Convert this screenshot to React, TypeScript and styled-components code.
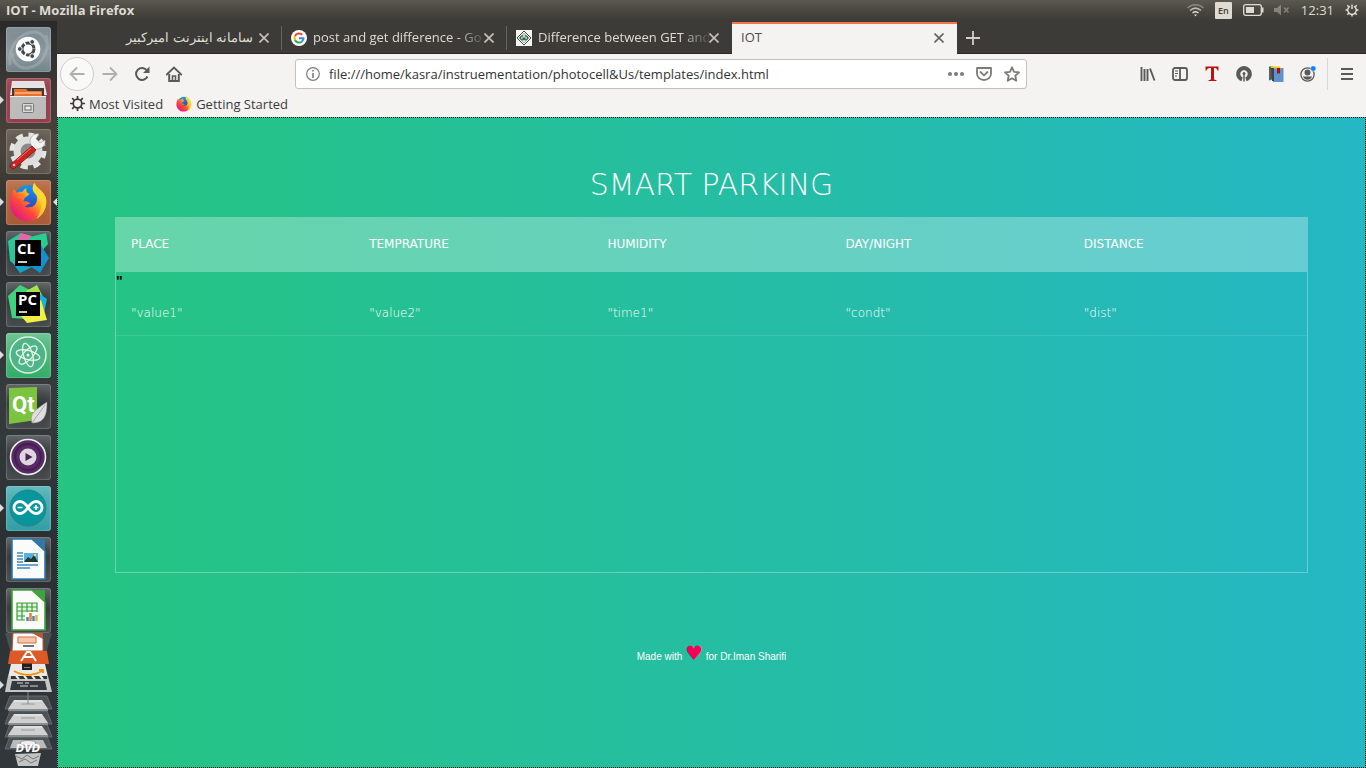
import React from "react";
import styled, { createGlobalStyle } from "styled-components";

const uiFont = `"Open Sans", "Noto Sans", sans-serif`;

const GlobalStyle = createGlobalStyle`
  * { box-sizing: border-box; }
  body { margin: 0; background: #2e3335; }
  button { font: inherit; color: inherit; background: none; border: 0; padding: 0; cursor: pointer; }
  a { color: inherit; text-decoration: none; }
`;

const Desktop = styled.div`
  min-height: 100vh;
  display: flex;
  flex-direction: column;
  font-family: ${uiFont};
`;

const TitleBar = styled.header`
  height: 21px;
  flex: none;
  display: flex;
  align-items: center;
  justify-content: space-between;
  padding: 0 6px 1px;
  background: linear-gradient(#5b594f, #45443e 60%, #3c3b37);
  color: #dfdbd2;
`;

const WindowTitle = styled.span`
  font-size: 13px;
  line-height: 18px;
  font-weight: 700;
`;

const Indicators = styled.div`
  display: flex;
  align-items: center;
`;

const Indicator = styled.button<{ $gap: number }>`
  display: flex;
  margin-right: ${(p) => p.$gap}px;
`;

const Keyboard = styled(Indicator)`
  width: 17px;
  height: 17px;
  align-items: center;
  justify-content: center;
  border-radius: 1px;
  background: #dfdbd2;
  color: #3c3b37;
  font-size: 9px;
  font-weight: 600;
`;

const Clock = styled(Indicator)`
  font-size: 13px;
  line-height: 18px;
`;

const Workspace = styled.div`
  flex: 1;
  display: flex;
`;

const Launcher = styled.nav`
  width: 57px;
  flex: none;
  display: flex;
  flex-direction: column;
  align-items: center;
  gap: 6px;
  padding-top: 6px;
  background: linear-gradient(#292a29, #3a3834 8%, #4b443b 17%, #3a3733 22%, #2d3133 30%, #363b3d 50%, #2b3033 70%, #31373a);
`;

const Tile = styled.button<{ $bg: string }>`
  position: relative;
  width: 45px;
  height: 45px;
  flex: none;
  border-radius: 3px;
  background: ${(p) => p.$bg};
  box-shadow: inset 0 0 0 1px rgba(255, 255, 255, 0.16), inset 0 6px 8px rgba(255, 255, 255, 0.1);
`;

const Arrow = styled.span<{ $side: "left" | "right" }>`
  position: absolute;
  top: 18px;
  ${(p) => p.$side}: -6px;
  border: 4px solid transparent;
  border-${(p) => p.$side}-color: #dcdcdc;
  border-${(p) => (p.$side === "left" ? "right" : "left")}-width: 0;
`;

const Stack = styled.svg`
  display: block;
  flex: none;
  margin-top: -6px;
`;

const Browser = styled.div`
  flex: 1;
  min-width: 0;
  display: flex;
  flex-direction: column;
`;

const TabStrip = styled.div`
  height: 33px;
  flex: none;
  display: flex;
  padding-top: 1px;
  background: #3c3b37;
  box-shadow: inset 0 -1px #2b2529;
`;

const TabItem = styled.div<{ $active?: boolean }>`
  width: 225px;
  display: flex;
  align-items: center;
  padding: 0 13px 0 9px;
  font-size: 13px;
  line-height: 18px;
  color: ${(p) => (p.$active ? "#4c4c4c" : "#dfdbd2")};
  background: ${(p) => (p.$active ? "#f4f3f2" : "transparent")};
  box-shadow: ${(p) => (p.$active ? "inset 0 2px #f07746" : "none")};
`;

const TabSeparator = styled.span`
  width: 1px;
  height: 24px;
  margin: 4px 0 0 -1px;
  background: #66645f;
`;

const TabLabel = styled.button<{ $fade?: boolean }>`
  flex: 1;
  min-width: 0;
  white-space: nowrap;
  text-align: start;
  padding: ${(p) => (p.$fade ? "0 0 2px 6px" : "0 6px 2px 0")};
  ${(p) => p.$fade && "mask-image: linear-gradient(to right, #000 84%, rgba(0, 0, 0, 0.1));"}
`;

const IconButton = styled.button<{ $size?: number }>`
  width: ${(p) => p.$size ?? 32}px;
  height: ${(p) => p.$size ?? 32}px;
  flex: none;
  display: flex;
  align-items: center;
  justify-content: center;
`;

const NavBar = styled.div`
  height: 40px;
  flex: none;
  display: flex;
  align-items: center;
  padding: 0 1px 0 3px;
  background: #f4f3f2;
  color: #5a5a58;
`;

const BackButton = styled(IconButton)`
  border: 1px solid #cfcdcb;
  border-radius: 50%;
  background: #f9f9f8;
  color: #b0afad;
`;

const ForwardButton = styled(IconButton)`
  color: #b0afad;
`;

const UrlBar = styled.div`
  flex: 1;
  min-width: 0;
  height: 30px;
  margin: 0 105px;
  display: flex;
  align-items: center;
  padding: 0 0 0 1px;
  border: 1px solid #c4c1be;
  border-radius: 3px;
  background: #fff;
  color: #7b7b7a;
`;

const UrlInput = styled.input`
  flex: 1;
  min-width: 0;
  padding: 0;
  border: 0;
  outline: 0;
  background: none;
  font: 13px ${uiFont};
  color: #333;
`;

const MenuButton = styled(IconButton)`
  width: 38px;
  margin-left: 3px;
  border-left: 1px solid #d9d7d5;
`;

const BookmarksBar = styled.div`
  height: 23px;
  flex: none;
  display: flex;
  align-items: center;
  gap: 13px;
  padding: 0 13px 4px;
  background: #f4f3f2;
  color: #3b3b3b;
  font-size: 13px;
  line-height: 18px;
`;

const Bookmark = styled.a`
  display: flex;
  align-items: center;
  gap: 4px;
`;

const Page = styled.main`
  flex: 1;
  padding: 50px 57px 0 57px;
  border: 1px dotted #000;
  background: linear-gradient(to right, #25c481, #25b7c4);
  font-family: "DejaVu Sans", sans-serif;
`;

const Heading = styled.h1`
  margin: 0 0 15px;
  font-size: 30px;
  line-height: 34px;
  font-weight: 300;
  text-align: center;
  text-transform: uppercase;
  color: #fff;
`;

const TablePanel = styled.div`
  min-height: 356px;
  border: 1px solid rgba(255, 255, 255, 0.3);
  border-top: 0;
`;

const DataTable = styled.table`
  width: 100%;
  table-layout: fixed;
  border-collapse: collapse;
`;

const HeadRow = styled.tr`
  background: rgba(255, 255, 255, 0.3);
`;

const HeadCell = styled.th`
  padding: 20px 15px;
  font-size: 12px;
  line-height: 15px;
  font-weight: 500;
  text-align: left;
  text-transform: uppercase;
  color: #fff;
`;

const StrayCell = styled.td`
  height: 18px;
  padding: 0;
  font: bold 14px/18px "Liberation Sans", sans-serif;
  color: #000;
`;

const Cell = styled.td`
  padding: 16px 15px 14px;
  border-bottom: 1px solid rgba(255, 255, 255, 0.1);
  font-size: 12px;
  line-height: 15px;
  font-weight: 300;
  color: #fff;
`;

const Credit = styled.footer`
  margin-top: 68px;
  font-family: "Liberation Sans", sans-serif;
  font-size: 10px;
  line-height: 24px;
  text-align: center;
  color: #fff;
`;

const Heart = styled.span`
  font-family: "DejaVu Sans", sans-serif;
  font-size: 20px;
  color: #f50057;
`;

const FirefoxLogo = ({ size, id }: { size: number; id: string }) => (
  <svg width={size} height={size} viewBox="0 0 40 40" aria-hidden>
    <defs>
      <linearGradient id={`${id}-body`} x1="0.85" y1="0.1" x2="0.15" y2="0.9">
        <stop offset="0" stopColor="#fff14a" />
        <stop offset="0.35" stopColor="#ffb01f" />
        <stop offset="0.65" stopColor="#ff4a3a" />
        <stop offset="1" stopColor="#e31587" />
      </linearGradient>
      <linearGradient id={`${id}-globe`} x1="0.5" y1="0" x2="0.5" y2="1">
        <stop offset="0" stopColor="#0a9bf0" />
        <stop offset="1" stopColor="#3a2fb4" />
      </linearGradient>
    </defs>
    <circle cx="20" cy="17" r="15" fill={`url(#${id}-globe)`} />
    <path
      d="M5 6c1 2 2 3 3 4 2-1 4-1 6-1 1-2 2-3 4-4-1 3 0 5 3 6-1 2-3 3-5 4 0 2-1 3-2 4 3-1 6 0 8 2-2 0-3 2-6 3 4 2 10 1 12-4 2-5 0-9-3-12-1-2-1-5 1-8 1 3 4 5 7 8 4 4 6 8 5 14-1 10-9 17-18 17C9 39 1 31 1 21 1 15 3 11 5 6z"
      fill={`url(#${id}-body)`}
    />
    <path d="M26 0c1 3 4 5 7 8 4 4 6 8 5 14-1 7-5 12-10 15 4-6 6-12 4-18-1-4-5-7-7-10-1-3-1-6 1-9z" fill="#ffd92e" opacity="0.8" />
  </svg>
);

const Svg = ({ size = 16, children }: { size?: number; children: React.ReactNode }) => (
  <svg width={size} height={size} viewBox="0 0 16 16" fill="none" stroke="currentColor" strokeWidth="1.8" aria-hidden>
    {children}
  </svg>
);

const CloseButton = () => (
  <IconButton $size={10} aria-label="Close tab">
    <svg width="10" height="10" viewBox="0 0 10 10" fill="none" stroke="currentColor" strokeWidth="1.6" opacity="0.85" aria-hidden>
      <path d="M0.5 0.5l9 9M9.5 0.5l-9 9" />
    </svg>
  </IconButton>
);

const GoogleIcon = () => (
  <svg width="16" height="16" viewBox="0 0 16 16" fill="none" strokeWidth="2" aria-hidden>
    <circle cx="8" cy="8" r="8" fill="#fff" />
    <path d="M11.2 4.8A4.5 4.5 0 0 0 4 6" stroke="#ea4335" />
    <path d="M4 6a4.5 4.5 0 0 0 0 4" stroke="#fbbc05" />
    <path d="M4 10a4.5 4.5 0 0 0 7 1.4" stroke="#34a853" />
    <path d="M8 8.2h4.5a4.5 4.5 0 0 1-1.5 3.2" stroke="#4285f4" />
  </svg>
);

const DiamondIcon = () => (
  <svg width="16" height="16" viewBox="0 0 16 16" aria-hidden>
    <path d="M0 0h16v16H0z" fill="#f4f6f4" />
    <path d="M8 1l7 7-7 7-7-7z" fill="#fff" stroke="#3c4641" />
    <path d="M8 3l5 5-5 5-5-5z" fill="#d6e4da" stroke="#8b9690" strokeWidth="0.7" />
    <path d="M7.3 6a2 2 0 1 0 .2 3.5V8H6M8.7 6a2 2 0 1 1-.2 3.5V8H10" fill="none" stroke="#2f6a46" strokeWidth="1.2" />
  </svg>
);

const GearIcon = ({ size = 14 }: { size?: number }) => (
  <svg width={size} height={size} viewBox="0 0 14 14" fill="none" stroke="currentColor" aria-hidden>
    <circle cx="7" cy="7" r="4" strokeWidth="1.6" />
    <path d="M7 0v3M7 11v3M0 7h3M11 7h3M2 2l2.200 2.200M9.800 9.800L12 12M12 2L9.800 4.200M4.200 9.800L2 12" strokeWidth="1.6" />
  </svg>
);

const PowerGearIcon = () => (
  <svg width="14" height="14" viewBox="0 0 14 14" fill="none" stroke="currentColor" aria-hidden>
    <path d="M5 3.300a4.300 4.300 0 1 0 4 0" strokeWidth="1.500" />
    <path d="M7 1.500v4.500M7 11.500v2M0.500 7H3M11 7h2.500M2.300 2.300L4 4M10 10l1.700 1.700M11.700 2.300L10 4M4 10l-1.700 1.700" strokeWidth="1.500" />
  </svg>
);

const UbuntuArt = () => (
  <>
    <path d="M4 38C2 20 12 5 30 5c8 2 12 10 12 17M40 8c4 14-2 30-18 33C12 42 6 34 6 26" fill="none" stroke="#c5ced2" strokeWidth="3" opacity="0.3" />
    <circle cx="22" cy="22" r="12.300" fill="#fff" />
    <circle cx="22" cy="22" r="6" fill="none" stroke="#3e4a50" strokeWidth="3" strokeDasharray="11.200 1.400" />
    <g fill="#3e4a50" stroke="#fff">
      <circle cx="13.800" cy="22" r="2.400" />
      <circle cx="26.200" cy="14.900" r="2.400" />
      <circle cx="26.200" cy="29.100" r="2.400" />
    </g>
  </>
);

const FilesArt = () => (
  <>
    <path d="M6 3h32l3 14H4z" fill="#e3e3e2" />
    <path d="M6 10h32v9H6z" fill="#3e3a38" />
    <path d="M8 11h12l2 2h14v7H8z" fill="#e9702a" />
    <path d="M9 15h26" stroke="#ffe0b5" />
    <rect x="4" y="18" width="36" height="23" rx="1" fill="#bcbcbb" />
    <path d="M4 18.500h36" stroke="#eee" />
    <rect x="16.500" y="25.500" width="11" height="9" rx="1" fill="#d9d9d8" stroke="#777" />
    <rect x="19" y="28" width="6" height="4" fill="#eee" stroke="#666" />
  </>
);

const SettingsArt = () => (
  <>
    <circle cx="22" cy="22" r="16" fill="none" stroke="#e4e4e3" strokeWidth="5" strokeDasharray="7 5.570" />
    <circle cx="22" cy="22" r="11" fill="#8c8a87" stroke="#dededd" strokeWidth="7" />
    <path d="M26 18l-2-5c0-5 4-9 9-8l-3 5 4 4 5-3c1 5-3 9-8 9l-3 1z" fill="#f3f3f3" stroke="#999" strokeWidth="0.600" />
    <path d="M26 17l4 4L9 39c-3 2-6-1-4-4z" fill="#cf2222" stroke="#8d1010" strokeWidth="0.800" />
    <circle cx="8" cy="36" r="1.300" fill="#f5d0d0" />
    <path d="M11 31l14-12" stroke="#ef7c74" />
  </>
);

const ClionArt = () => (
  <>
    <path d="M2 10L15 2l5 8-6 28L4 30z" fill="#26c99b" />
    <path d="M15 2l11 3-6 10H9z" fill="#e667a8" />
    <path d="M24 6l16-4 2 11-8 9-14-8z" fill="#25cf91" />
    <path d="M35 14l8 13-9 15-10-7z" fill="#1590cf" />
    <path d="M4 28l6 6 16 2-12 6z" fill="#13a5cc" />
    <rect x="9" y="9" width="26" height="26" fill="#000" />
    <text x="11" y="23" fontFamily="Open Sans, sans-serif" fontWeight="700" fontSize="15" fill="#fff">CL</text>
    <path d="M12 31h9" stroke="#fff" strokeWidth="1.600" />
  </>
);

const PycharmArt = () => (
  <>
    <path d="M2 14L14 3l12 6-6 28L6 36z" fill="#3fd37f" />
    <path d="M20 9l11-6 6 12-12 8z" fill="#a6e24b" />
    <path d="M34 12l7 5-3 14-8-8z" fill="#18b3d3" />
    <path d="M35 18l6 20-20 3-6-7z" fill="#f1ee45" />
    <rect x="10" y="10" width="24" height="24" fill="#000" />
    <text x="12" y="23" fontFamily="Open Sans, sans-serif" fontWeight="700" fontSize="15" fill="#fff">PC</text>
    <path d="M13 30h8" stroke="#fff" strokeWidth="1.600" />
  </>
);

const AtomArt = () => (
  <>
    <circle cx="22" cy="22" r="18" fill="#4fb588" stroke="#d7f1e2" strokeWidth="1.500" />
    <g fill="none" stroke="#e2f6ea" strokeWidth="1.300">
      <ellipse cx="22" cy="22" rx="12" ry="4.500" transform="rotate(14 22 22)" />
      <ellipse cx="22" cy="22" rx="12" ry="4.500" transform="rotate(74 22 22)" />
      <ellipse cx="22" cy="22" rx="12" ry="4.500" transform="rotate(134 22 22)" />
    </g>
    <circle cx="22" cy="22" r="1.500" fill="#fff" />
  </>
);

const QtArt = () => (
  <>
    <path d="M3 4l28-1v33L3 40z" fill="#7cc440" />
    <text x="6" y="28" fontFamily="Roboto, sans-serif" fontWeight="700" fontSize="22" fill="#fff">Qt</text>
    <path d="M41 18c0 14-3 21-15 21-3-9 3-13 15-21z" fill="#dedede" stroke="#888" strokeWidth="0.500" />
    <path d="M39 21L26 39" stroke="#999" strokeWidth="0.800" />
  </>
);

const PlayerArt = () => (
  <>
    <circle cx="22" cy="22" r="17.500" fill="#582a66" stroke="#eee" strokeWidth="1.600" />
    <circle cx="22" cy="22" r="13" fill="none" stroke="#432050" strokeWidth="2" />
    <circle cx="22" cy="22" r="8.500" fill="#ddd6df" />
    <path d="M19.500 18l7 4-7 4z" fill="#4b2259" />
  </>
);

const ArduinoArt = () => (
  <>
    <circle cx="22" cy="22" r="18" fill="#07969c" stroke="#2c7f85" />
    <path d="M22 21.500c-3-4.500-5-6-8-6a6 6 0 0 0 0 12c3 0 5-1.500 8-6s5-6 8-6a6 6 0 0 1 0 12c-3 0-5-1.500-8-6z" fill="none" stroke="#fff" strokeWidth="2.800" />
    <path d="M11.500 21.500h5M27.500 21.500h5M30 19v5" stroke="#fff" strokeWidth="1.500" />
  </>
);

const SheetArt = ({ color, children }: { color: string; children: React.ReactNode }) => (
  <>
    <path d="M6 2h20l13 12v28H6z" fill="#fbfbfb" stroke={color} strokeWidth="1.600" />
    <path d="M25 2h14v12z" fill={color} />
    {children}
  </>
);

const WriterArt = () => (
  <SheetArt color="#2f78a8">
    <path d="M11 16h6M11 19h6M11 22h6M11 25h6M11 28h21M11 31h13" stroke="#3b8ac2" strokeWidth="1.500" />
    <rect x="18" y="16" width="14" height="9" fill="#5ab0e3" />
    <path d="M18 25l4-5 3 2 3-4 4 7z" fill="#1e3b2d" />
    <circle cx="29" cy="18" r="1.300" fill="#f7d94b" />
  </SheetArt>
);

const CalcArt = () => (
  <SheetArt color="#3da33a">
    <path d="M11 15h20v17H11z" fill="#e2f5dd" stroke="#3c9c3a" strokeWidth="1.200" />
    <path d="M11 19h20M11 23h20M11 28h20M16 15v17M21 15v17M26 15v17" stroke="#3c9c3a" strokeWidth="1.200" />
    <rect x="19" y="24" width="13" height="10" fill="#fff" />
    <path d="M21.500 33v-4M27.500 33v-5" stroke="#3a88c8" strokeWidth="2.500" />
    <path d="M24.500 33v-8" stroke="#ec7c30" strokeWidth="2.500" />
    <path d="M30.500 33v-6" stroke="#e8b92f" strokeWidth="2.500" />
  </SheetArt>
);

const glass = "linear-gradient(#54585a, #33383a 45%, #484c4e)";

const apps: { name: string; bg: string; art: React.ReactNode; open?: boolean; focused?: boolean }[] = [
  { name: "Search", bg: "linear-gradient(#75858c, #8d9aa0 60%, #71838b)", art: <UbuntuArt /> },
  { name: "Files", bg: "#963e4d", art: <FilesArt />, open: true },
  { name: "Settings", bg: "rgba(120, 110, 98, 0.5)", art: <SettingsArt /> },
  { name: "Firefox", bg: "linear-gradient(#b96a43, #a95a36)", art: null, open: true, focused: true },
  { name: "CLion", bg: glass, art: <ClionArt /> },
  { name: "PyCharm", bg: glass, art: <PycharmArt /> },
  { name: "Atom", bg: "linear-gradient(#63c089, #31ad68)", art: <AtomArt />, open: true },
  { name: "Qt Creator", bg: glass, art: <QtArt /> },
  { name: "Media Player", bg: glass, art: <PlayerArt /> },
  { name: "Arduino", bg: "linear-gradient(#55b5ba, #319ea4)", art: <ArduinoArt />, open: true },
  { name: "Writer", bg: glass, art: <WriterArt /> },
  { name: "Calc", bg: glass, art: <CalcArt /> },
];

const FirefoxTile = styled(Tile)`
  display: flex;
  align-items: center;
  justify-content: center;
`;

const FoldedIcons = () => (
  <Stack width="57" height="135" viewBox="0 633 57 135" aria-hidden>
    <path d="M5 633h47l-6 20H11z" fill="#4a4f51" />
    <path d="M13 633h21l9 5v13H12z" fill="#fafafa" stroke="#b8562f" />
    <path d="M32 633h11v6z" fill="#b8562f" />
    <path d="M18 637h18v6H18z" fill="#f3c6ad" stroke="#d9733f" />
    <path d="M23 646h11" stroke="#444" strokeWidth="1.500" />
    <path d="M10 651h37l2 13H8z" fill="#dd5a26" />
    <path d="M21 661l6-9h3l6 9M23 657h10" fill="none" stroke="#fff" strokeWidth="2" />
    <path d="M11 664h34l3 13H8z" fill="#e9e9e8" />
    <path d="M22 664.500h9v4.500h-8v-2.500h8" fill="none" stroke="#222" strokeWidth="2" />
    <path d="M14 671c9 5 19 5 28 0M39 670h4v3" fill="none" stroke="#f29100" strokeWidth="1.800" />
    <path d="M8 676h40l4 16H5z" fill="#c4c5c5" />
    <path d="M11 676h36v3H11z" fill="#333" />
    <path d="M16 676l3 3M24 676l3 3M32 676l3 3M40 676l3 3" stroke="#eee" strokeWidth="2" />
    <path d="M12 681h33l2 9H10z" fill="#33393c" />
    <path d="M17 683h6M25 683h4M20 686h8M30 686h8" stroke="#ddd" />
    <path d="M0 681l4 4-4 4z" fill="#dcdcdc" />
    {[696, 711, 724, 736].map((y) => (
      <path key={y} d={`M10 ${y}h37l5 13H5z`} fill="#ffffff" fillOpacity="0.14" stroke="#70777a" strokeWidth="0.700" />
    ))}
    {[700, 714, 726].map((y) => (
      <g key={y}>
        <path d={`M14 ${y}h28l6 9H8z`} fill="#cfd0d0" />
        <path d={`M8 ${y + 9}h40v2H8z`} fill="#8b8e8f" />
        <path d={`M21 ${y + 4}h14`} stroke="#999" />
        <path d={`M14 ${y + 1}h28`} stroke="#eee" />
      </g>
    ))}
    <path d="M28 692v12" stroke="#888" />
    <path d="M13 740h30l4 8H10z" fill="#b9baba" />
    <ellipse cx="28" cy="743" rx="8" ry="2.500" fill="#eee" stroke="#999" />
    <text x="28" y="752" textAnchor="middle" fontFamily="DejaVu Sans, sans-serif" fontStyle="italic" fontWeight="700" fontSize="10" fill="#fff">DVD</text>
    <path d="M15 754l26-1-3 13H18z" fill="#c2c3c3" />
    <path d="M16 756l6 3 5-4 6 4 6-3M19 762l6-3 6 4 6-3" fill="none" stroke="#777" />
  </Stack>
);

const columns = ["Place", "Temprature", "Humidity", "Day/Night", "Distance"];
const values = ['"value1"', '"value2"', '"time1"', '"condt"', '"dist"'];

export default function App() {
  return (
    <Desktop>
      <GlobalStyle />
      <TitleBar>
        <WindowTitle>IOT - Mozilla Firefox</WindowTitle>
        <Indicators>
          <Indicator $gap={11} aria-label="Network">
            <svg width="17" height="14" viewBox="0 0 17 14" fill="none" stroke="currentColor" strokeWidth="1.500">
              <path d="M0.500 5C5 0.500 12 0.500 16.500 5" opacity="0.400" />
              <path d="M3 7.500c3.500-3 7.500-3 11 0" opacity="0.800" />
              <path d="M5.500 10c2-1.600 4-1.600 6 0" />
              <path d="M7 11.500h3l-1.500 2z" fill="currentColor" stroke="none" />
            </svg>
          </Indicator>
          <Keyboard $gap={11}>En</Keyboard>
          <Indicator $gap={10} aria-label="Battery">
            <svg width="21" height="12" viewBox="0 0 21 12">
              <rect x="0.700" y="0.700" width="17.600" height="10.600" rx="2" fill="none" stroke="currentColor" strokeWidth="1.300" />
              <path d="M3 3h8v6H3z" fill="currentColor" />
              <path d="M19 3.500h1.500v5H19z" fill="currentColor" />
            </svg>
          </Indicator>
          <Indicator $gap={11} aria-label="Sound">
            <svg width="16" height="12" viewBox="0 0 16 12" opacity="0.400">
              <path d="M0 4h3l4-3.500v11L3 8H0z" fill="currentColor" />
              <path d="M10 3.500l4.500 5M14.500 3.500l-4.500 5" stroke="currentColor" strokeWidth="1.500" />
            </svg>
          </Indicator>
          <Clock $gap={11}>12:31</Clock>
          <Indicator $gap={1} aria-label="System">
            <PowerGearIcon />
          </Indicator>
        </Indicators>
      </TitleBar>

      <Workspace>
        <Launcher aria-label="Launcher">
          {apps.map((app) => {
            const TileType = app.art ? Tile : FirefoxTile;
            return (
              <TileType key={app.name} $bg={app.bg} aria-label={app.name}>
                {app.open && <Arrow $side="left" />}
                {app.art ? (
                  <svg width="45" height="45" viewBox="0 0 45 45" aria-hidden>
                    {app.art}
                  </svg>
                ) : (
                  <FirefoxLogo size={39} id="dock" />
                )}
                {app.focused && <Arrow $side="right" />}
              </TileType>
            );
          })}
          <FoldedIcons />
        </Launcher>

        <Browser>
          <TabStrip>
            <TabItem>
              <TabLabel dir="rtl">سامانه اینترنت امیرکبیر</TabLabel>
              <CloseButton />
            </TabItem>
            <TabSeparator />
            <TabItem>
              <GoogleIcon />
              <TabLabel $fade>post and get difference - Go</TabLabel>
              <CloseButton />
            </TabItem>
            <TabSeparator />
            <TabItem>
              <DiamondIcon />
              <TabLabel $fade>Difference between GET and</TabLabel>
              <CloseButton />
            </TabItem>
            <TabItem $active>
              <TabLabel>IOT</TabLabel>
              <CloseButton />
            </TabItem>
            <IconButton aria-label="New tab">
              <svg width="14" height="14" viewBox="0 0 14 14" stroke="#d3cfc7" strokeWidth="1.800">
                <path d="M7 0v14M0 7h14" />
              </svg>
            </IconButton>
          </TabStrip>

          <NavBar>
            <BackButton $size={34} aria-label="Back">
              <Svg><path d="M15.500 8H1.500M8 1.500L1.500 8 8 14.500" /></Svg>
            </BackButton>
            <ForwardButton aria-label="Forward">
              <Svg><path d="M0.500 8h14M8 1.500L14.500 8 8 14.500" /></Svg>
            </ForwardButton>
            <IconButton aria-label="Reload">
              <Svg>
                <path d="M13.500 10.500A6 6 0 1 1 13 4.500" strokeWidth="2" />
                <path d="M15.500 0.500v6.500H9z" fill="currentColor" stroke="none" />
              </Svg>
            </IconButton>
            <IconButton aria-label="Home">
              <Svg>
                <path d="M0.800 8.500L8 1.500l7.200 7" strokeLinecap="round" />
                <path d="M3.200 8v7h9.600V8" strokeWidth="2" />
                <path d="M6.500 15v-5h3v5" strokeWidth="1.600" />
              </Svg>
            </IconButton>
            <UrlBar>
              <IconButton aria-label="Site information">
                <svg width="14" height="14" viewBox="0 0 14 14" fill="none" stroke="currentColor">
                  <circle cx="7" cy="7" r="6.300" strokeWidth="1.200" />
                  <path d="M7 6v5M7 3v1.600" strokeWidth="1.600" />
                </svg>
              </IconButton>
              <UrlInput
                aria-label="Address"
                defaultValue="file:///home/kasra/instruementation/photocell&Us/templates/index.html"
              />
              <IconButton $size={28} aria-label="Page actions">
                <Svg>
                  <g fill="currentColor" stroke="none">
                    <circle cx="2" cy="8" r="2" /><circle cx="8" cy="8" r="2" /><circle cx="14" cy="8" r="2" />
                  </g>
                </Svg>
              </IconButton>
              <IconButton $size={28} aria-label="Save to Pocket">
                <Svg>
                  <path d="M1 2h14v5.500a7 6.500 0 0 1-14 0z" strokeLinejoin="round" />
                  <path d="M4.500 6L8 9.300 11.500 6" strokeLinecap="round" />
                </Svg>
              </IconButton>
              <IconButton $size={28} aria-label="Bookmark this page">
                <Svg>
                  <path d="M8 1.300l2 4.500 5 .5-3.700 3.400 1 5L8 12.200l-4.300 2.500 1-5L1 6.300l5-.5z" strokeLinejoin="round" />
                </Svg>
              </IconButton>
            </UrlBar>
            <IconButton aria-label="Library">
              <Svg><path d="M1.500 1v14M4.500 3v12M7.500 3v12M10 2.500l4.500 12" strokeWidth="1.900" /></Svg>
            </IconButton>
            <IconButton aria-label="Sidebars">
              <Svg>
                <rect x="1" y="2" width="14" height="12" rx="2" />
                <path d="M8 2v12" />
                <path d="M3 5h3M3 7.500h3M3 10h2" strokeWidth="1.100" />
              </Svg>
            </IconButton>
            <IconButton aria-label="Text tool">
              <Svg>
                <path d="M1.500 0.500h13v4h-1c-.5-2-1.500-2.500-3.500-2.500v11.500l2.500.7v.8h-8v-.8l2.500-.7V2c-2.500 0-4 .5-4.500 2.500h-1z" fill="#c20f0f" stroke="none" />
              </Svg>
            </IconButton>
            <IconButton aria-label="Open access">
              <Svg>
                <path d="M5.500 15.300A7.800 7.800 0 1 1 10.500 15.300L9.300 11.500a3.700 3.700 0 1 0-2.600 0z" fill="currentColor" stroke="none" />
                <path d="M8 7v8.500" strokeWidth="1.500" />
                <circle cx="8" cy="7.500" r="1.500" fill="currentColor" stroke="none" />
              </Svg>
            </IconButton>
            <IconButton aria-label="Reference library">
              <Svg>
                <g stroke="none">
                  <path d="M1 0.500h4V13L1 14.500z" fill="#595f60" />
                  <path d="M5 2h10.500v14H5z" fill="#5f93cf" />
                  <path d="M3 0.500h9L13 2.500H3z" fill="#fdc60a" />
                  <path d="M3 2h3v13H4z" fill="#3c444c" />
                  <path d="M9 2h3v6l-1.500-1.300L9 8z" fill="#b00d0d" />
                </g>
              </Svg>
            </IconButton>
            <IconButton aria-label="Account">
              <Svg>
                <circle cx="7.500" cy="8.500" r="6.600" strokeWidth="1.300" />
                <circle cx="7.500" cy="6.500" r="3" fill="currentColor" stroke="none" />
                <path d="M3 10.500h9c-.5 2-2 3.200-4.500 3.200S3.500 12.500 3 10.500z" fill="currentColor" stroke="none" />
                <circle cx="13.200" cy="2.500" r="2.800" fill="#0a84ff" stroke="#f4f3f2" strokeWidth="0.600" />
              </Svg>
            </IconButton>
            <MenuButton aria-label="Menu">
              <svg width="12" height="12" viewBox="0 0 12 12" stroke="currentColor" strokeWidth="1.800">
                <path d="M0 1h12M0 6h12M0 11h12" />
              </svg>
            </MenuButton>
          </NavBar>

          <BookmarksBar>
            <Bookmark href="#most-visited">
              <GearIcon size={15} />
              Most Visited
            </Bookmark>
            <Bookmark href="#getting-started">
              <FirefoxLogo size={16} id="bookmark" />
              Getting Started
            </Bookmark>
          </BookmarksBar>

          <Page>
            <Heading>Smart Parking</Heading>
            <TablePanel>
              <DataTable>
                <thead>
                  <HeadRow>
                    {columns.map((column) => (
                      <HeadCell key={column} scope="col">{column}</HeadCell>
                    ))}
                  </HeadRow>
                </thead>
                <tbody>
                  <tr>
                    <StrayCell colSpan={5}>"</StrayCell>
                  </tr>
                  <tr>
                    {values.map((value) => (
                      <Cell key={value}>{value}</Cell>
                    ))}
                  </tr>
                </tbody>
              </DataTable>
            </TablePanel>
            <Credit>
              Made with <Heart>♥</Heart> for Dr.Iman Sharifi
            </Credit>
          </Page>
        </Browser>
      </Workspace>
    </Desktop>
  );
}
